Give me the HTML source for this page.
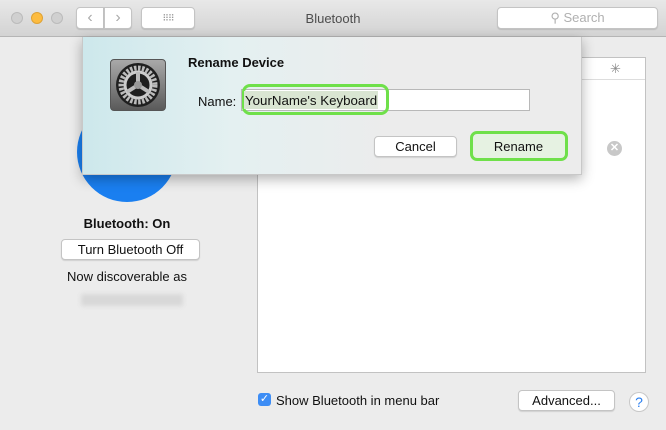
<!DOCTYPE html>
<html><head><meta charset="utf-8"><style>
*{box-sizing:border-box;margin:0;padding:0}
body{width:666px;height:430px;overflow:hidden;background:#ececec;font-family:"Liberation Sans",sans-serif;font-size:13px;color:#111;position:relative}
.a{position:absolute}
.btn{position:absolute;background:#fff;border:1px solid #c4c4c4;border-radius:4px;box-shadow:0 1px 1px rgba(0,0,0,.12);text-align:center}
</style></head><body>
<div class="a" style="left:0;top:0;width:666px;height:37px;background:linear-gradient(#e8e8e8,#d3d3d3);border-bottom:1px solid #b5b5b5"></div>
<div class="a" style="left:11px;top:12px;width:12px;height:12px;border-radius:50%;background:#d0d0d0;border:1px solid #bbb"></div>
<div class="a" style="left:31px;top:12px;width:12px;height:12px;border-radius:50%;background:#fdbc40;border:1px solid #dea236"></div>
<div class="a" style="left:51px;top:12px;width:12px;height:12px;border-radius:50%;background:#d0d0d0;border:1px solid #bbb"></div>
<div class="btn" style="left:76px;top:7px;width:28px;height:22px;border-radius:4px 0 0 4px;color:#aaa;font-size:16px;line-height:20px">&#8249;</div>
<div class="btn" style="left:104px;top:7px;width:28px;height:22px;border-radius:0 4px 4px 0;color:#aaa;font-size:16px;line-height:20px">&#8250;</div>
<div class="btn" style="left:141px;top:7px;width:54px;height:22px;color:#999;font-size:9px;line-height:20px;letter-spacing:-1px">⠿⠿</div>
<div class="a" style="left:0;width:666px;top:11px;text-align:center;color:#4d4d4d;font-size:13px">Bluetooth</div>
<div class="btn" style="left:497px;top:7px;width:161px;height:22px;color:#b0b0b0;line-height:20px">&#9906; Search</div>

<div class="a" style="left:77px;top:102px;width:100px;height:100px;border-radius:50%;background:#1a7ff0"></div>
<div class="a" style="left:0;width:254px;top:216px;text-align:center;font-weight:bold">Bluetooth: On</div>
<div class="btn" style="left:61px;top:239px;width:139px;height:21px;line-height:19px">Turn Bluetooth Off</div>
<div class="a" style="left:0;width:254px;top:269px;text-align:center">Now discoverable as</div>
<div class="a" style="left:81px;top:294px;width:102px;height:12px;background:#d8d8d8;filter:blur(2px)"></div>

<div class="a" style="left:257px;top:57px;width:389px;height:316px;background:#fff;border:1px solid #c2c2c2"></div>
<div class="a" style="left:258px;top:79px;width:387px;height:1px;background:#ddd"></div>
<div class="a" style="left:610px;top:61px;color:#888;font-size:13px">✳</div>
<div class="a" style="left:607px;top:141px;width:15px;height:15px;border-radius:50%;background:#c8c8c8;color:#fff;font-size:11px;line-height:15px;text-align:center;font-weight:bold">✕</div>

<div class="a" style="left:258px;top:393px;width:13px;height:13px;border-radius:3px;background:#3d8df5;color:#fff;font-size:11px;line-height:13px;text-align:center">✓</div>
<div class="a" style="left:276px;top:393px">Show Bluetooth in menu bar</div>
<div class="btn" style="left:518px;top:390px;width:97px;height:21px;line-height:19px">Advanced...</div>
<div class="a" style="left:629px;top:392px;width:20px;height:20px;border-radius:50%;background:#fff;border:1px solid #c8c8c8;color:#2a7ff0;text-align:center;line-height:18px;font-size:14px">?</div>

<div class="a" style="left:82px;top:37px;width:500px;height:138px;background:linear-gradient(90deg,#cde8ec 0,#e4f0f1 30%,#ececec 62%);box-shadow:0 4px 12px rgba(0,0,0,.3);border:1px solid #c8c8c8;border-top:none"></div>
<div class="a" style="left:110px;top:59px;width:56px;height:52px;border-radius:4px;background:linear-gradient(#a9a9a9,#5a5a5a);border:1px solid #555"></div>
<svg class="a" style="left:113px;top:60px" width="50" height="50" viewBox="0 0 50 50">
<circle cx="25" cy="25" r="22" fill="#1f1f1f"/>
<circle cx="25" cy="25" r="17" fill="none" stroke="#bbb" stroke-width="5" stroke-dasharray="2.5 1.5"/>
<circle cx="25" cy="25" r="13" fill="none" stroke="#ccc" stroke-width="3"/>
<g stroke="#bbb" stroke-width="4"><line x1="25" y1="25" x2="25" y2="12"/><line x1="25" y1="25" x2="36" y2="32"/><line x1="25" y1="25" x2="14" y2="32"/></g>
<circle cx="25" cy="25" r="4" fill="#999"/>
</svg>
<div class="a" style="left:188px;top:55px;font-weight:bold">Rename Device</div>
<div class="a" style="left:198px;top:94px">Name:</div>
<div class="a" style="left:241px;top:89px;width:289px;height:22px;background:#fff;border:1px solid #b8b8b8"></div>
<div class="a" style="left:242px;top:84px;width:147px;height:31px;border:3px solid #6fe04a;border-radius:8px"></div>
<div class="a" style="left:244px;top:91px;width:134px;height:18px;background:#d9e5d2"></div>
<div class="a" style="left:245px;top:93px;font-size:13.3px">YourName's Keyboard</div>
<div class="btn" style="left:374px;top:136px;width:83px;height:21px;line-height:19px">Cancel</div>
<div class="a" style="left:470px;top:131px;width:98px;height:30px;border:3px solid #6fe04a;border-radius:7px;background:#e6f2e2"></div>
<div class="a" style="left:474px;top:137px;width:89px;height:20px;line-height:20px;text-align:center">Rename</div>
</body></html>
